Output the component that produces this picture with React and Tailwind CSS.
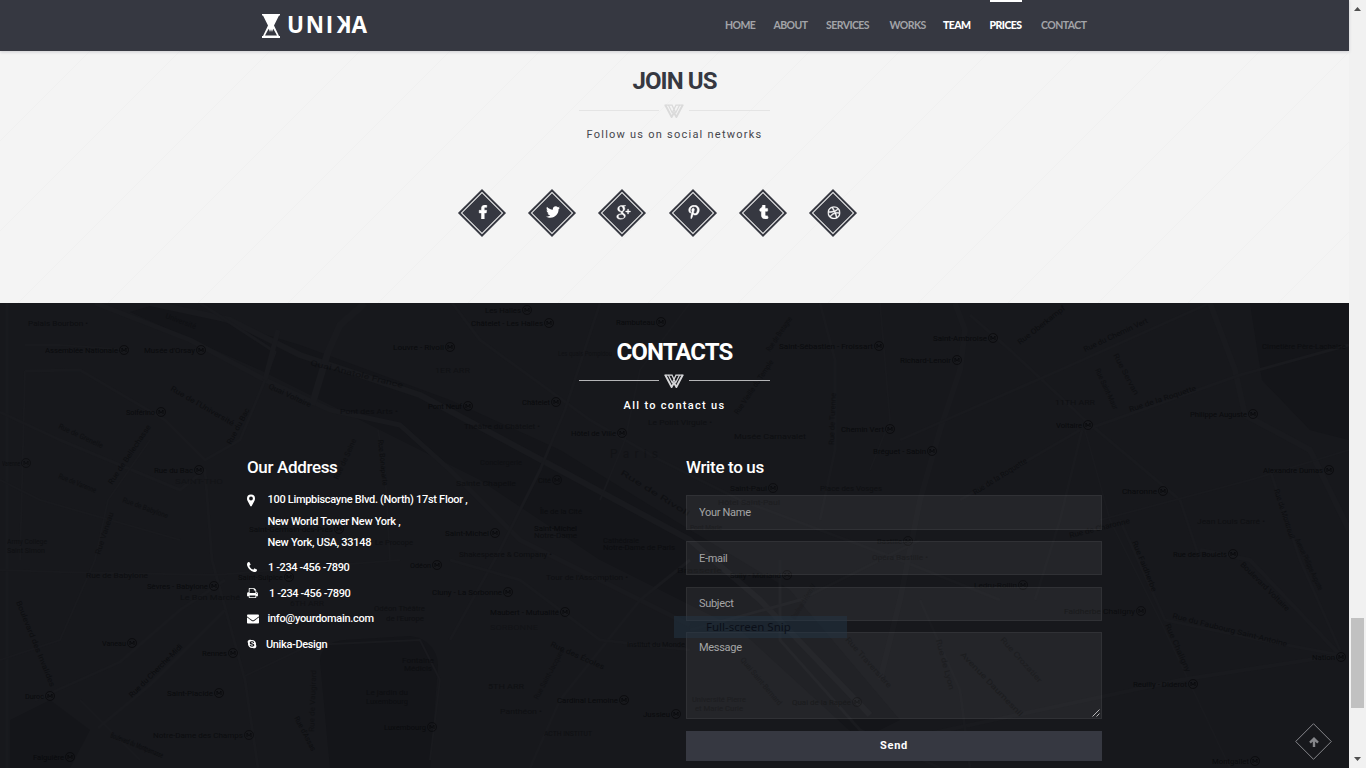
import React from "react";
import {
  FaFacebookF,
  FaTwitter,
  FaPinterestP,
  FaTumblr,
  FaDribbble,
  FaEnvelope,
  FaSkype,
} from "react-icons/fa";
import { TiSocialGooglePlus } from "react-icons/ti";

const NAV = [
  { label: "HOME", cls: "w-[30px] text-[#a3a4a8] font-bold" },
  { label: "ABOUT", cls: "w-[34px] text-[#a3a4a8] font-bold" },
  { label: "SERVICES", cls: "w-[45px] text-[#a3a4a8] font-bold" },
  { label: "WORKS", cls: "w-[35px] text-[#a3a4a8] font-bold" },
  { label: "TEAM", cls: "w-[28px] text-white font-black" },
  { label: "PRICES", cls: "w-[32px] text-white font-black", active: true },
  { label: "CONTACT", cls: "ml-px w-[46px] text-[#a3a4a8] font-bold" },
];

const SOCIAL = [
  { Icon: FaFacebookF, cls: "size-[14px] stroke-white stroke-[20]" },
  { Icon: FaTwitter, cls: "size-[14px]" },
  { Icon: TiSocialGooglePlus, cls: "size-[22px] stroke-white stroke-[0.5]" },
  { Icon: FaPinterestP, cls: "size-[14px] stroke-white stroke-[20]" },
  { Icon: FaTumblr, cls: "size-[14px] stroke-white stroke-[20]" },
  { Icon: FaDribbble, cls: "size-[13px] stroke-white stroke-[20]" },
];

// Roads: [path, width]
const ROADS = [
  ["M95 303 L190 340 L265 380 L330 410 L400 425 L450 470 L520 540 L620 590 L690 625", 5],
  ["M150 303 L230 320 L300 355 L420 395 L560 470 L690 540 L760 600 L870 715", 6],
  ["M200 303 L275 352 L265 380 L240 440 L205 460 L165 420 L80 370 L25 371", 3],
  ["M365 303 L340 325 L328 352 L312 405", 7],
  ["M278 330 L265 380", 5],
  ["M7 303 V768", 3],
  ["M25 371 L20 560 M25 345 H60 L130 350", 2],
  ["M0 412 L60 440 L180 490 L205 470 L212 560 L245 680 L258 768", 3],
  ["M0 570 L60 572 L215 575 L400 560", 2],
  ["M150 440 L108 500 L95 560 L60 640 L0 660", 2],
  ["M35 700 L120 662 L180 610 L225 580", 3],
  ["M98 728 L150 685 L225 610", 3],
  ["M80 700 L140 760", 2],
  ["M245 676 L310 645 L420 640 L440 680 L430 760", 2],
  ["M390 560 L385 470 L378 430", 2],
  ["M450 300 L480 340 L590 420 L660 460 L740 500 L900 560 L1000 600", 3],
  ["M600 303 L565 410 L540 470 L500 550 L450 640", 3],
  ["M690 303 L640 370 L625 440 L600 500", 2],
  ["M820 303 L835 360 L835 450 L820 520", 3],
  ["M880 303 L890 420 L870 470", 2],
  ["M955 303 L965 330 L960 370 L940 430 L920 500 L900 600 L880 680", 6],
  ["M970 315 L1010 350 L1085 420 L1180 500 L1200 560", 3],
  ["M900 440 L1060 370 L1210 303", 3],
  ["M1210 303 L1235 370 L1245 415 L1310 450 L1349 530", 6],
  ["M1085 430 L1240 375 L1349 345", 3],
  ["M1082 430 L1060 520 L1035 600", 3],
  ["M1085 430 L1110 520 L1160 620 L1230 768", 2],
  ["M960 500 L1080 430", 3],
  ["M1100 520 L1250 480 L1349 450", 2],
  ["M1200 550 L1250 560 L1340 655 L1180 680 L1040 710 L900 740", 4],
  ["M1270 470 L1300 560 L1340 650", 3],
  ["M1120 520 L1165 620 L1260 640 L1340 655", 3],
  ["M530 768 L560 700 L640 600 L690 560", 3],
  ["M450 560 L520 580 L600 640 L690 650", 3],
  ["M780 560 V640 L860 730 L940 768", 3],
  ["M690 630 L800 600 L920 540", 3],
  ["M920 600 L960 690 L970 768", 3],
  ["M0 480 L40 500 L110 520 L180 540", 2],
];

// Labels: [text, x, y, angle, length, opacity, hasMetroSign]
const LABELS = [
  ["Palais Bourbon •", 28, 326, 0, 60, 0.6],
  ["Assemblée Nationale", 45, 353, 0, 84, 0.8, 1],
  ["Musée d'Orsay", 144, 353, 0, 62, 0.8, 1],
  ["Solférino", 126, 415, 0, 40, 0.8, 1],
  ["Rue du Bac", 154, 473, 0, 50, 0.8, 1],
  ["SAINT-THO", 175, 484, 0, 48, 0.3],
  ["Varenne", 2, 466, 0, 29, 0.6, 1],
  ["Louvre - Rivoli", 393, 350, 0, 62, 0.8, 1],
  ["Pont des Arts •", 340, 414, 0, 58, 0.5],
  ["Pont Neuf", 428, 409, 0, 45, 0.8, 1],
  ["Les Halles", 485, 313, 0, 47, 0.7, 1],
  ["Châtelet - Les Halles", 471, 326, 0, 83, 0.8, 1],
  ["Rambuteau", 616, 325, 0, 50, 0.8, 1],
  ["Les quais Pompidou", 558, 356, 0, 54, 0.4],
  ["1ER ARR", 435, 373, 0, 35, 0.4],
  ["Châtelet", 522, 405, 0, 39, 0.8, 1],
  ["Théâtre du Châtelet •", 464, 429, 0, 76, 0.5],
  ["Hôtel de Ville", 571, 436, 0, 56, 0.8, 1],
  ["Le Point Virgule •", 648, 425, 0, 64, 0.5],
  ["Musée Carnavalet", 734, 439, 0, 72, 0.6],
  ["Chemin Vert", 841, 432, 0, 54, 0.8, 1],
  ["Saint-Sébastien - Froissart", 779, 349, 0, 105, 0.8, 1],
  ["Richard-Lenoir", 900, 363, 0, 62, 0.8, 1],
  ["Saint-Ambroise", 933, 341, 0, 65, 0.8, 1],
  ["Bréguet - Sabin", 873, 454, 0, 64, 0.8, 1],
  ["Voltaire", 1056, 428, 0, 37, 0.8, 1],
  ["11TH ARR", 1055, 405, 0, 40, 0.5],
  ["Philippe Auguste", 1190, 417, 0, 68, 0.8, 1],
  ["Cimetière Père-Lachaise", 1262, 349, 0, 84, 0.6],
  ["Alexandre Dumas", 1263, 473, 0, 71, 0.8, 1],
  ["Charonne", 1122, 494, 0, 46, 0.8, 1],
  ["Jean Louis Carré •", 1197, 524, 0, 68, 0.5],
  ["Conciergerie", 480, 465, 0, 42, 0.4],
  ["Cité", 538, 483, 0, 24, 0.6, 1],
  ["Sainte Chapelle", 456, 486, 0, 60, 0.5],
  ["Île de la Cité", 540, 514, 0, 42, 0.6],
  ["Saint-Michel", 445, 536, 0, 55, 0.8, 1],
  ["Saint-Michel", 534, 531, 0, 43, 0.8],
  ["Notre-Dame", 534, 538, 0, 43, 0.6],
  ["Cathédrale", 603, 543, 0, 36, 0.5],
  ["Notre-Dame de Paris", 603, 550, 0, 72, 0.6],
  ["Shakespeare & Company •", 459, 557, 0, 93, 0.6],
  ["Tour de l'Assomption •", 546, 580, 0, 82, 0.5],
  ["Cluny - La Sorbonne", 432, 595, 0, 81, 0.8, 1],
  ["Maubert - Mutualité", 490, 615, 0, 80, 0.8, 1],
  ["SORBONNE", 490, 630, 0, 48, 0.3],
  ["Institut du Monde", 627, 647, 0, 58, 0.6],
  ["5TH ARR", 488, 689, 0, 36, 0.5],
  ["Cardinal Lemoine", 557, 703, 0, 72, 0.8, 1],
  ["Jussieu", 643, 717, 0, 38, 0.8, 1],
  ["Panthéon •", 500, 714, 0, 42, 0.5],
  ["ACTH INSTITUT", 544, 736, 0, 48, 0.5],
  ["Saint-Paul", 730, 491, 0, 48, 0.7, 1],
  ["Place des Vosges", 820, 491, 0, 62, 0.5],
  ["Hôtel Saint-Paul", 718, 505, 0, 62, 0.5],
  ["Pont Marie", 690, 530, 0, 32, 0.5],
  ["Bastille", 877, 544, 0, 36, 0.6, 1],
  ["Opéra Bastille •", 872, 560, 0, 56, 0.5],
  ["Brasserie", 677, 573, 0, 45, 0.5],
  ["Sully - Morland", 730, 578, 0, 62, 0.7, 1],
  ["Université Pierre", 692, 702, 0, 54, 0.5],
  ["et Marie Curie", 695, 711, 0, 48, 0.5],
  ["Quai de la Rapée", 792, 705, 0, 70, 0.7, 1],
  ["Ledru-Rollin", 974, 588, 0, 54, 0.7, 1],
  ["Faidherbe Chaligny", 1064, 614, 0, 82, 0.7, 1],
  ["Rue des Boulets", 1173, 557, 0, 65, 0.8, 1],
  ["Nation", 1312, 660, 0, 34, 0.8, 1],
  ["Reuilly - Diderot", 1133, 687, 0, 65, 0.8, 1],
  ["Montgallet", 1212, 764, 0, 48, 0.8, 1],
  ["Saint-Germain-des-Prés", 249, 532, 0, 95, 0.7, 1],
  ["Le Procope", 375, 545, 0, 38, 0.5],
  ["Odéon", 410, 568, 0, 32, 0.8, 1],
  ["Saint-Sulpice", 238, 580, 0, 56, 0.7, 1],
  ["Sèvres - Babylone", 147, 589, 0, 72, 0.8, 1],
  ["Le Bon Marché", 180, 600, 0, 60, 0.5],
  ["Rue de Babylone", 86, 578, 0, 62, 0.6],
  ["6TH ARR", 290, 606, 0, 34, 0.4],
  ["Odéon Théâtre", 374, 611, 0, 51, 0.5],
  ["de l'Europe", 386, 621, 0, 38, 0.5],
  ["Vaneau", 102, 646, 0, 35, 0.8, 1],
  ["Rennes", 202, 656, 0, 36, 0.8, 1],
  ["Duroc", 25, 699, 0, 30, 0.8, 1],
  ["Saint-Placide", 167, 696, 0, 57, 0.8, 1],
  ["Notre-Dame des Champs", 153, 738, 0, 101, 0.7, 1],
  ["Falguière", 33, 760, 0, 42, 0.8, 1],
  ["Luxembourg", 384, 730, 0, 53, 0.7, 1],
  ["Fontaine", 402, 663, 0, 32, 0.5],
  ["Médicis", 404, 671, 0, 28, 0.5],
  ["Le jardin du", 366, 695, 0, 42, 0.5],
  ["Luxembourg", 366, 704, 0, 42, 0.5],
  ["Army College", 7, 544, 0, 40, 0.5],
  ["Saint Simon", 7, 553, 0, 38, 0.5],
  ["Rue de l'Université", 170, 390, 30, 72, 0.6],
  ["Université", 165, 318, 20, 32, 0.4],
  ["Quai Anatole France", 310, 365, 14, 95, 0.5],
  ["Quai Voltaire", 268, 388, 25, 46, 0.5],
  ["Rue du Bac", 231, 445, -62, 40, 0.6],
  ["Rue de Bellechasse", 112, 485, -56, 70, 0.6],
  ["Rue de Grenelle", 58, 428, 25, 48, 0.5],
  ["Rue de Varenne", 58, 478, 22, 40, 0.5],
  ["Rue de Babylone", 122, 502, 20, 48, 0.5],
  ["Rue Vaneau", 100, 555, -72, 44, 0.5],
  ["Boulevard des Invalides", 16, 602, 68, 92, 0.6],
  ["Rue du Cherche-Midi", 132, 698, -45, 72, 0.7],
  ["Boulevard du Montparnasse", 110, 737, 22, 56, 0.7],
  ["Rue d'Assas", 294, 718, 62, 38, 0.6],
  ["Rue Bonaparte", 378, 440, 84, 46, 0.6],
  ["Rue de Seine", 338, 480, -65, 44, 0.5],
  ["Rue de Rivoli", 620, 474, 32, 80, 0.5],
  ["Rue de Vaugirard", 314, 732, -88, 62, 0.4],
  ["Rue Saint-Jacques", 538, 700, -62, 56, 0.4],
  ["Rue des Écoles", 550, 646, 24, 58, 0.6],
  ["Rue de Turenne", 834, 445, -88, 52, 0.5],
  ["Rue Vieille du Temple", 738, 415, -56, 64, 0.5],
  ["Rue de Bretagne", 770, 352, -56, 40, 0.5],
  ["Boulevard Henri IV", 795, 620, -58, 40, 0.4],
  ["Avenue Daumesnil", 960, 655, 46, 86, 0.6],
  ["Rue de Lyon", 936, 640, 75, 52, 0.5],
  ["Rue Crozatier", 1000, 640, 48, 58, 0.5],
  ["Rue Traversière", 845, 640, 48, 65, 0.5],
  ["Quai Saint-Bernard", 740, 660, 50, 60, 0.5],
  ["Rue de la Roquette", 975, 495, -32, 62, 0.6],
  ["Rue de Charonne", 1070, 538, -14, 62, 0.6],
  ["Rue de la Roquette", 1130, 412, -18, 70, 0.6],
  ["Rue du Chemin Vert", 1085, 352, -25, 70, 0.6],
  ["Rue Oberkampf", 1020, 345, -38, 58, 0.6],
  ["Rue Saint-Maur", 1095, 370, 65, 44, 0.5],
  ["Rue Servan", 1113, 355, 62, 46, 0.5],
  ["Rue Faidherbe", 1132, 542, 68, 54, 0.6],
  ["Rue du Faubourg Saint-Antoine", 1172, 618, 14, 118, 0.6],
  ["Boulevard Voltaire", 1240, 565, 45, 66, 0.6],
  ["Rue de Montreuil", 1274, 490, 72, 52, 0.6],
  ["Rue Chaligny", 1165, 625, 66, 52, 0.5],
  ["Avenue Philippe Auguste", 1295, 540, 65, 56, 0.5],
];

function CityMap() {
  return (
    <svg
      className="absolute inset-0 h-full w-full"
      viewBox="0 303 1349 465"
      preserveAspectRatio="none"
      aria-hidden="true"
    >
      <g fill="#141519">
        <path d="M160 303 L300 345 L450 400 L560 450 L690 530 L790 590 L900 720 L860 740 L740 630 L600 560 L480 480 L380 430 L260 370 L130 312 Z" />
        <path d="M320 660 Q322 642 345 640 L410 636 Q436 640 438 665 L430 768 L330 768 Z" />
        <path d="M10 720 L50 700 L90 730 L70 768 L10 768 Z" />
        <path d="M1250 303 H1349 V440 L1310 430 L1262 380 Z" />
      </g>
      <g fill="none" stroke="#191a1e">
        {ROADS.map(([d, w], i) => (
          <path key={i} d={d} strokeWidth={w} strokeLinejoin="round" />
        ))}
      </g>
      <g className="font-['Roboto',sans-serif]" fill="#07080a" fontSize="7.5">
        <text x="610" y="458" fontSize="12" textLength="48" opacity="0.3">
          Paris
        </text>
        {LABELS.map(([t, x, y, a, len, o, metro], i) => (
          <g key={i} opacity={o} transform={`rotate(${a} ${x} ${y})`}>
            <text x={x} y={y} textLength={metro ? len - 11 : len} lengthAdjust="spacingAndGlyphs">
              {t}
            </text>
            {metro && (
              <>
                <circle cx={x + len - 5} cy={y - 3} r="4.5" fill="none" stroke="#07080a" strokeWidth="0.8" />
                <path d={`M${x + len - 7} ${y - 1} v-4 l2 3 l2 -3 v4`} fill="none" stroke="#07080a" strokeWidth="0.9" />
              </>
            )}
          </g>
        ))}
      </g>
    </svg>
  );
}

function Divider({ line, mark }) {
  return (
    <div className="flex h-[14px] w-[191px] items-start justify-between">
      <div className={`mt-[6px] h-px w-20 ${line}`} />
      <svg className={`h-[14px] w-5 ${mark}`} viewBox="0 0 20 14" fill="none" stroke="currentColor">
        <path d="M.5 1.2H8.6M11.4 1.2H19.5" strokeWidth="1.3" />
        <path d="M1.3 1L7.6 13L10 8.8L12.4 13L18.7 1" strokeWidth="1.9" />
        <path d="M4.4 1L8 8.2M15.6 1L12 8.2" strokeWidth="1.2" />
        <path d="M8 1.2L10 5.2L12 1.2M10 5.2L8 9.4M10 5.2L12 9.4" strokeWidth="1.3" />
      </svg>
      <div className={`mt-[6px] h-px w-[81px] ${line}`} />
    </div>
  );
}

function PinIcon({ className }) {
  return (
    <svg className={className} viewBox="0 0 8 12" fill="currentColor">
      <path
        fillRule="evenodd"
        d="M4 0a4 4 0 0 1 4 4c0 1-.2 1.500-.5 2.200L4.700 11.600a.8.8 0 0 1-1.400 0L.5 6.200C.2 5.500 0 5 0 4a4 4 0 0 1 4-4Zm0 2.100a1.900 1.900 0 1 0 0 3.800 1.900 1.900 0 0 0 0-3.800Z"
      />
    </svg>
  );
}

function PhoneIcon({ className }) {
  return (
    <svg className={className} viewBox="0 128 1408 1408" fill="currentColor">
      <path d="M1408 1240q0 27-10 70.5t-21 68.5q-21 50-122 106-94 51-186 51-27 0-53-3.5t-57.5-12.5-47-14.5-55.5-20.5-49-18q-98-35-175-83-127-79-264-216t-216-264q-48-77-83-175-3-9-18-49t-20.5-55.5-14.5-47-12.5-57.5-3.500-53q0-92 51-186 56-101 106-122 25-11 68.500-21t70.500-10q14 0 21 3 18 6 53 76 11 19 30 54t35 63.500 31 53.500q3 4 17.500 25t21.500 35.500 7 28.500q0 20-28.500 50t-62 55-62 53-28.500 46q0 9 5 22.500t8.500 20.500 14 24 11.500 19q76 137 174 235t235 174q2 1 19 11.500t24 14 20.500 8.500 22.500 5q18 0 46-28.500t53-62 55-62 50-28.500q14 0 28.500 7t35.500 21.500 25 17.500q25 15 53.500 31t63.500 35 54 30q70 35 76 53 3 7 3 21z" />
    </svg>
  );
}

function PrintIcon({ className }) {
  return (
    <svg className={className} viewBox="0 128 1664 1536" fill="currentColor">
      <path d="M384 1536h896v-256h-896v256zm0-640h896v-384h-160q-40 0-68-28t-28-68v-160h-640v640zm1152 64q0-26-19-45t-45-19-45 19-19 45 19 45 45 19 45-19 19-45zm128 0v416q0 13-9.500 22.500t-22.500 9.500h-224v160q0 40-28 68t-68 28h-960q-40 0-68-28t-28-68v-160h-224q-13 0-22.500-9.500t-9.500-22.500v-416q0-79 56.500-135.500t135.500-56.500h64v-544q0-40 28-68t68-28h672q40 0 88 20t76 48l152 152q28 28 48 76t20 88v256h64q79 0 135.500 56.500t56.500 135.500z" />
    </svg>
  );
}

function Logo() {
  return (
    <a className="flex items-center text-white">
      <svg className="h-6 w-[18px]" viewBox="0 0 18 24">
        <path d="M0 0H18V1.500H17L12 11.500L17 22H18V24H0V22H1L6 11.500L1 1.500H0Z" fill="#fff" />
        <path d="M5.400 17L6.800 14.800L8 18L9 15.200L10 18L11.200 14.800L12.600 17L15 21.600H3Z" fill="#363841" />
      </svg>
      <span className="ml-[7px] flex -translate-y-px font-['Open_Sans',sans-serif] text-[22.5px] leading-6 font-bold tracking-[1.7px]">
        <span>UNI</span>
        <span className="-scale-x-100">K</span>
        <span>A</span>
      </span>
    </a>
  );
}

function AddressRow({ Icon, iconCls, textCls, children }) {
  return (
    <li className="flex items-start">
      <Icon className={`shrink-0 ${iconCls}`} />
      <span className={textCls}>{children}</span>
    </li>
  );
}

export default function App() {
  const field =
    "block w-full border border-white/6 bg-white/6 px-3 text-[11px] tracking-[-0.3px] text-[#a5a5a6] placeholder:text-[#a5a5a6] outline-none";
  return (
    <div className="flex h-[768px] w-[1366px] overflow-hidden font-['Roboto',sans-serif]">
      <main className="relative flex w-[1349px] flex-col">
        <header className="relative z-10 flex h-[51px] shrink-0 justify-between bg-[#363841] pr-[262px] pl-[262px] shadow-[0_1px_3px_rgba(50,50,70,0.2)]">
          <Logo />
          <nav className="flex gap-[18.5px] font-['Lato',sans-serif] text-[10.5px] leading-[51px] tracking-[-0.55px]">
            {NAV.map(({ label, cls, active }) => (
              <a key={label} className={`flex flex-col whitespace-nowrap ${cls}`}>
                <span className={`h-[2px] w-full shrink-0 ${active ? "bg-white" : ""}`} />
                <span className="-mt-[2px]">{label}</span>
              </a>
            ))}
          </nav>
        </header>

        <section className="relative flex h-[252px] shrink-0 flex-col items-center bg-[#f4f4f4]">
          <svg className="absolute inset-0 h-full w-full" aria-hidden="true">
            <defs>
              <pattern id="weave" width="180" height="180" patternUnits="userSpaceOnUse">
                <path d="M0 180L180 0M0 90L90 0M90 180L180 90" stroke="#f0f0f0" strokeWidth="1" fill="none" />
              </pattern>
            </defs>
            <rect width="100%" height="100%" fill="url(#weave)" />
          </svg>
          <h2 className="relative mt-[18px] text-2xl leading-6 font-bold tracking-[-0.9px] text-[#363841]">JOIN US</h2>
          <div className="relative mt-[11px]">
            <Divider line="bg-[#e4e4e4]" mark="text-[#dadada]" />
          </div>
          <p className="relative mt-[9px] text-[11px] leading-4 tracking-[1.240px] text-[#45464c]">Follow us on social networks</p>
          <div className="relative mt-[46px] mr-[34px] flex w-[399px] justify-between">
            {SOCIAL.map(({ Icon, cls }, i) => (
              <a key={i} className="flex size-12 items-center justify-center">
                <span className="flex size-[34px] shrink-0 rotate-45 bg-[#363841] p-[2px]">
                  <span className="flex size-full items-center justify-center border border-[#f0f0f0] text-white">
                    <span className="flex -rotate-45 pb-[2px] pl-[2px]">
                      <Icon className={`shrink-0 ${cls}`} />
                    </span>
                  </span>
                </span>
              </a>
            ))}
          </div>
        </section>

        <section className="relative flex h-[465px] shrink-0 flex-col items-center bg-[#17181c] text-white">
          <CityMap />
          <h2 className="relative mt-[37px] text-2xl leading-6 font-bold tracking-[-0.9px]">CONTACTS</h2>
          <div className="relative mt-[11px]">
            <Divider line="-translate-y-px bg-[#b5b5b7]" mark="-translate-y-px text-[#d8d8da]" />
          </div>
          <p className="relative mt-[9px] text-[11px] leading-4 font-medium tracking-[1.300px]">All to contact us</p>

          <div className="relative mt-[41px] flex w-[855px] justify-between">
            <div>
              <h3 className="text-[17px] leading-6 font-medium tracking-[-0.350px]">Our Address</h3>
              <ul className="mt-[10px] flex flex-col text-[11px] leading-[21.5px] font-medium tracking-[-0.3px] whitespace-nowrap">
                <AddressRow Icon={PinIcon} iconCls="mt-[5px] h-[13px] w-[8px]" textCls="ml-[12.5px]">
                  100 Limpbiscayne Blvd. (North) 17st Floor ,
                  <br />
                  New World Tower New York ,
                  <br />
                  New York, USA, 33148
                </AddressRow>
                <AddressRow Icon={PhoneIcon} iconCls="mt-[8px] size-[10px]" textCls="mt-[3px] ml-[11px] tracking-[-0.4px]">
                  1 -234 -456 -7890
                </AddressRow>
                <AddressRow Icon={PrintIcon} iconCls="mt-[10px] h-[10px] w-[11px]" textCls="mt-[5px] ml-[11px] tracking-[-0.4px]">
                  1 -234 -456 -7890
                </AddressRow>
                <AddressRow Icon={FaEnvelope} iconCls="mt-[8px] size-[12px]" textCls="mt-[3px] ml-[8.5px]">
                  info@yourdomain.com
                </AddressRow>
                <AddressRow Icon={FaSkype} iconCls="mt-[10px] size-[10px]" textCls="mt-[5px] ml-[9px] tracking-[-0.350px]">
                  Unika-Design
                </AddressRow>
              </ul>
            </div>

            <form className="w-[416px]">
              <h3 className="text-[17px] leading-6 font-medium tracking-[-0.350px]">Write to us</h3>
              <input className={`mt-4 h-[35px] ${field}`} placeholder="Your Name" />
              <input className={`mt-[11px] h-[34px] ${field}`} placeholder="E-mail" />
              <input className={`mt-3 h-[34px] pb-[2px] ${field}`} placeholder="Subject" />
              <div className="relative mt-[11px]">
                <textarea className={`h-[87px] resize-none pt-[7px] ${field}`} placeholder="Message" />
                <svg className="absolute right-[2px] bottom-[2px] size-2" viewBox="0 0 8 8" stroke="#c8c8c8" fill="none">
                  <path d="M.5 7.500L7.500 .5M4.500 7.500L7.500 4.500" strokeWidth="0.9" />
                </svg>
              </div>
              <button
                type="button"
                className="mt-3 block h-[30px] w-full bg-[#363841] text-[11px] leading-[28px] font-bold tracking-[0.7px]"
              >
                Send
              </button>
            </form>
          </div>
        </section>

        <div className="absolute top-[616px] left-[674px] h-[22px] w-[173px] bg-[#243546]/50 pl-8 font-['Noto_Sans',sans-serif] text-[11.5px] leading-[22px] text-[#0b0f18]">
          Full-screen Snip
        </div>

        <a className="absolute top-[723px] left-[1295px] flex size-[37px] items-center justify-center text-[#85868a]">
          <svg className="absolute inset-0 size-full" viewBox="0 0 37 37" fill="none" stroke="currentColor">
            <path d="M18.500 .7L36.300 18.500L18.500 36.300L.7 18.500Z" />
          </svg>
          <svg className="size-[10px]" viewBox="0 0 10 10" fill="none" stroke="currentColor" strokeWidth="2.4">
            <path d="M5 10V2M1 5.600L5 1.700L9 5.600" />
          </svg>
        </a>
      </main>

      <aside className="flex w-[17px] flex-col items-center bg-[#f1f1f1] py-[7px]">
        <svg className="h-1 w-[7px]" viewBox="0 0 7 4">
          <path d="M0 4L3.500 0L7 4Z" fill="#505050" />
        </svg>
        <div className="mt-[607px] h-[90px] w-[13px] shrink-0 bg-[#c1c1c1]" />
        <svg className="mt-auto h-1 w-[7px]" viewBox="0 0 7 4">
          <path d="M0 0L3.500 4L7 0Z" fill="#505050" />
        </svg>
      </aside>
    </div>
  );
}
